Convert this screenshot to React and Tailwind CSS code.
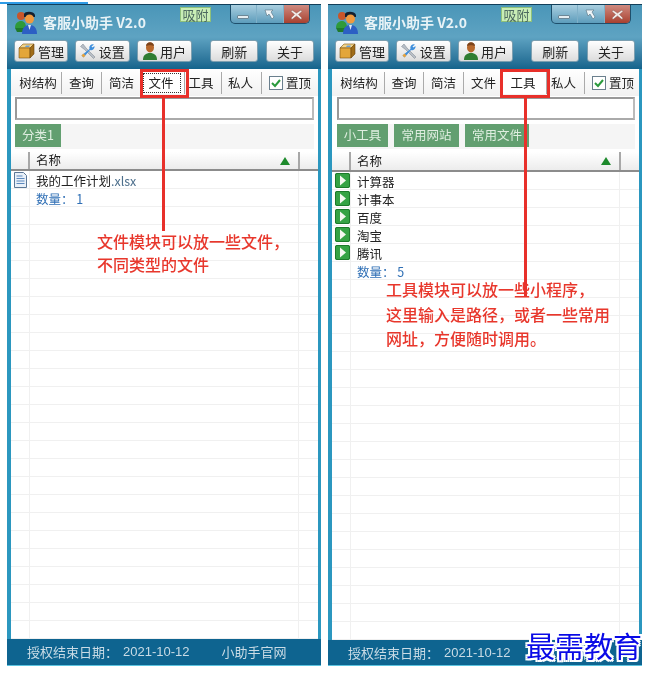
import React from 'react';

function LogoIcon() {
  return (
    <svg width="25" height="25" viewBox="0 0 25 25" className="shrink-0">
      <circle cx="7" cy="6" r="4" fill="#c8562a" />
      <path d="M1 18c0-5 3-7 6-7s5 2 5 7z" fill="#2f9a3a" />
      <path d="M1 18h9v4H3z" fill="#1f7a2c" />
      <path d="M10 4c1-3 10-3 11 1v2H10z" fill="#14202e" />
      <circle cx="15.500" cy="9" r="4.500" fill="#f09a3e" />
      <path d="M8 24c0-6 3-9 7.500-9s7.500 3 7.500 9z" fill="#2c5fc4" />
      <path d="M14 15h3l-1.500 5z" fill="#dfe8f5" />
    </svg>
  );
}

function BoxIcon() {
  return (
    <svg width="17" height="17" viewBox="0 0 17 17" className="shrink-0">
      <path d="M1 5l4-4h11l-4 4z" fill="#f4d488" stroke="#7a5212" strokeWidth="0.6" />
      <path d="M1 5h11v10H1z" fill="#e3a63a" stroke="#7a5212" strokeWidth="0.6" />
      <path d="M12 5l4-4v10l-4 4z" fill="#a06c18" stroke="#6a4510" strokeWidth="0.6" />
      <path d="M8 2.500h4l-1 1.500H7z" fill="#6aa0d8" />
    </svg>
  );
}

function ToolsIcon() {
  return (
    <svg width="16" height="16" viewBox="0 0 16 16" className="shrink-0">
      <path d="M3 1l3 4 9 9-1.500 1.500-9-9-4-3z" fill="#b7bec6" stroke="#7a838c" strokeWidth="0.5" />
      <path d="M14 1.500a3.500 3.500 0 0 0-4.500 4.500L1.500 12.500l2 2L10 7a3.500 3.500 0 0 0 4.500-4l-2 1.500-1-1z" fill="#3f8fdc" />
      <path d="M1.500 12.500l2 2 2-2-2-2z" fill="#e8a23a" />
    </svg>
  );
}

function UserIcon() {
  return (
    <svg width="14" height="18" viewBox="0 0 14 18" className="shrink-0">
      <ellipse cx="7" cy="5.500" rx="4" ry="5" fill="#b8682c" />
      <path d="M3 4c0-5 8-5 8 0-2-1-6-1-8 0z" fill="#7d431a" />
      <path d="M0 18c0-5 3-7 7-7s7 2 7 7z" fill="#2f7d32" />
    </svg>
  );
}

function DocIcon() {
  return (
    <svg width="13" height="16" viewBox="0 0 13 16" className="shrink-0">
      <path d="M.5.500h9l3 3v12H.5z" fill="#e9f0f8" stroke="#5b7796" />
      <path d="M2.500 4h6M2.500 6.500h8M2.500 9h8M2.500 11.500h8" stroke="#5c88bd" strokeWidth="1.200" />
    </svg>
  );
}

function PlayIcon() {
  return (
    <svg width="15" height="15" viewBox="0 0 15 15" className="shrink-0">
      <rect width="15" height="15" rx="2" fill="#35a344" />
      <rect x="0.500" y="0.500" width="14" height="14" rx="1.500" fill="none" stroke="#1c7a2a" />
      <path d="M5 2.500l6 5-6 5z" fill="#f4f8f0" />
    </svg>
  );
}

function WinControls() {
  return (
    <div className="flex h-[19px] w-[80px] overflow-hidden rounded-b-[5px] border border-t-0 border-[#1e4f6c] bg-linear-to-b from-[#a9cfe0] to-[#5c9cbb]">
      <div className="flex w-[26px] items-end justify-center border-r border-[#7fb0c8] pb-[4px]">
        <span className="h-[4px] w-[12px] rounded-[1px] border border-[#6d8796] bg-[#e5edf1]" />
      </div>
      <div className="flex w-[27px] items-center justify-center border-r border-[#7fb0c8]">
        <svg width="11" height="11" viewBox="0 0 11 11">
          <path d="M1 1h8L7 3l3 5-2 2-3-5-2 2z" fill="#eef4f7" stroke="#54707f" strokeWidth="0.6" />
        </svg>
      </div>
      <div className="flex flex-1 items-center justify-center bg-linear-to-b from-[#cf8a80] to-[#a8402f]">
        <svg width="13" height="11" viewBox="0 0 13 11">
          <path d="M2 1l4.500 3L11 1l1 1.500L8.500 5.500 12 9l-1 1.500L6.500 7 2 10.500 1 9l3.500-3.500L1 2.500z" fill="#f1e9e6" stroke="#7a4a40" strokeWidth="0.4" />
        </svg>
      </div>
    </div>
  );
}

function ToolBtn({ icon, label, cls }) {
  return (
    <div className={`flex h-[22px] items-center justify-center gap-[3px] rounded-[3px] border border-[#7d9fb0] bg-linear-to-b from-white to-[#dcdcdc] text-[13px] text-[#222] ${cls}`}>
      {icon}
      <span className="translate-y-[1px]">{label}</span>
    </div>
  );
}

function Tab({ label, cls = '', active, focus }) {
  return (
    <div className={`relative flex h-[22px] items-center justify-center text-[12.500px] text-[#222] ${active ? 'bg-white' : ''} ${cls}`}>
      {focus && <span className="absolute inset-[1px] right-[3px] border border-dotted border-[#333]" />}
      <span>{label}</span>
    </div>
  );
}

function Grid({ rows }) {
  const blank = Array.from({ length: 26 - rows.length }, (_, i) => i);
  const rowCls = 'flex h-[18px] shrink-0 border-b border-[#f0f0f0]';
  return (
    <div className="flex min-h-0 flex-1 flex-col overflow-hidden bg-white">
      {rows.map((row) => (
        <div key={row.key} className={rowCls}>
          <div className="flex w-[19px] shrink-0 items-center border-r border-[#f0f0f0] pl-[3px]">{row.icon}</div>
          <div className={`flex-1 pl-[6px] text-[12.500px] leading-[19px] ${row.cls || 'text-[#222]'}`}>{row.text}</div>
          <div className="w-[20px] shrink-0 border-l border-[#f0f0f0]" />
        </div>
      ))}
      {blank.map((i) => (
        <div key={i} className={rowCls}>
          <div className="w-[19px] shrink-0 border-r border-[#f0f0f0]" />
          <div className="flex-1" />
          <div className="w-[20px] shrink-0 border-l border-[#f0f0f0]" />
        </div>
      ))}
    </div>
  );
}

function Note({ lines, cls }) {
  return (
    <div className={`absolute whitespace-nowrap text-[16px] font-medium text-[#e8372c] ${cls}`}>
      {lines.map((line) => (
        <p key={line}>{line}</p>
      ))}
    </div>
  );
}

function Win({ tabs, cats, rows, alt, children }) {
  return (
    <div className="relative flex h-[662px] w-[314px] shrink-0 flex-col border-t border-[#123f5a] bg-[#2b97bf]">
      <div className="flex h-[64px] flex-col bg-linear-to-b from-[#4a96b8] via-[#5ea3c2] to-[#14648c] px-[7px]">
        <div className="flex h-[35px] items-start">
          <div className="mt-[5px]"><LogoIcon /></div>
          <span className="ml-[4px] mt-[7px] text-[14px] font-bold leading-[20px] text-[#e8f3f7]">客服小助手 V2.0</span>
          <span className="ml-[34px] mt-[2px] flex h-[15px] w-[31px] items-center justify-center border border-[#8fc07a] bg-[#c9eeb6] text-[13px] leading-none text-[#4d6a60]">吸附</span>
          <div className="ml-[19px]"><WinControls /></div>
        </div>
        <div className="flex items-center">
          <ToolBtn icon={<BoxIcon />} label="管理" cls="w-[54px]" />
          <ToolBtn icon={<ToolsIcon />} label="设置" cls="ml-[7px] w-[55px]" />
          <ToolBtn icon={<UserIcon />} label="用户" cls="ml-[7px] w-[56px]" />
          <ToolBtn label="刷新" cls="ml-[18px] w-[48px]" />
          <ToolBtn label="关于" cls="ml-[8px] w-[48px]" />
        </div>
      </div>

      <div className="ml-[4px] mr-[3px] flex min-h-0 flex-1 flex-col bg-white">
        <div className="flex h-[27px] items-start bg-linear-to-b from-white to-[#f1f1f1] pl-[4px] pt-[3px]">
          {tabs.map((t) => (
            <Tab key={t.label} label={t.label} cls={t.cls} active={t.active} focus={t.focus} />
          ))}
          <span className="ml-[7px] mt-[4px] flex h-[14px] w-[14px] items-center justify-center border border-[#6a7f8d] bg-white">
            <svg width="10" height="10" viewBox="0 0 10 10">
              <path d="M1 5l3 3 5-6" fill="none" stroke="#2a9a3c" strokeWidth="2" />
            </svg>
          </span>
          <span className="ml-[3px] mt-[3px] text-[12.500px] leading-[16px] text-[#222]">置顶</span>
        </div>
        <div className={`pr-[4px] pt-[1px] ${alt ? 'pl-[5px]' : 'pl-[4px]'}`}>
          <div className="h-[23px] border-2 border-[#999] border-b-[#aaa] border-r-[#bbb] bg-white" />
        </div>
        <div className={`mr-[4px] mt-[4px] flex h-[25px] gap-[6px] bg-[#f5f5f5] ${alt ? 'ml-[5px]' : 'ml-[4px]'}`}>
          {cats.map((c) => (
            <span key={c.label} className={`flex h-[23px] items-center justify-center bg-[#629f70] text-[12.500px] text-[#dfeee0] ${c.cls}`}>{c.label}</span>
          ))}
        </div>
        <div className={`mt-[3px] flex shrink-0 border-b-2 border-[#8c8c8c] bg-linear-to-b from-white to-[#ececec] text-[12.500px] text-[#222] ${alt ? 'h-[20px]' : 'h-[19px]'}`}>
          <div className="w-[19px] shrink-0 border-r-2 border-[#a8a8a8]" />
          <div className="flex flex-1 items-center justify-between pl-[6px] pr-[8px]">
            <span>名称</span>
            <span className="h-0 w-0 border-x-[5px] border-b-[8px] border-x-transparent border-b-[#1d8a2c]" />
          </div>
          <div className="w-[20px] shrink-0 border-l-2 border-[#a8a8a8]" />
        </div>
        <Grid rows={rows} />
      </div>

      <div className={`flex shrink-0 items-center border-b border-[#5cc4e0] bg-[#0e6490] pl-[20px] text-[13px] leading-[16px] text-[#c9dbe5] ${alt ? 'h-[26px]' : 'h-[27px]'}`}>
        <span>授权结束日期：</span>
        <span className="ml-[5px] font-['Liberation_Sans',sans-serif]">2021-10-12</span>
        <span className="ml-[32px]">小助手官网</span>
      </div>
      {children}
    </div>
  );
}

const count = 'text-[#2f6fb5]';
const sep = 'border-r border-[#aaa]';

export default function App() {
  return (
    <div className="relative h-[678px] w-[648px] overflow-hidden bg-white font-['Noto_Sans_CJK_SC','Liberation_Sans',sans-serif] blur-[0.35px]">
      <div className="absolute left-0 top-[2px] h-[2px] w-[88px] bg-[#2e9be6]" />
      <div className="flex gap-[7px] pl-[7px] pt-[4px]">
        <Win
          tabs={[
            { label: '树结构', cls: `w-[47px] ${sep}` },
            { label: '查询', cls: `w-[40px] ${sep}` },
            { label: '简洁', cls: `w-[40px] ${sep}` },
            { label: '文件', cls: `w-[43px] pr-[4px] ${sep}`, active: true, focus: true },
            { label: '工具', cls: `w-[37px] pr-[4px] ${sep}` },
            { label: '私人', cls: `w-[40px] pr-[2px] ${sep}` },
          ]}
          cats={[{ label: '分类1', cls: 'w-[46px]' }]}
          rows={[
            { key: 'f', icon: <DocIcon />, text: <span>我的工作计划<span className="text-[#4d6f8c]">.xlsx</span></span> },
            { key: 'n', text: '数量： 1', cls: count },
          ]}
        >
          <span className="absolute left-[133px] top-[64px] h-[29px] w-[49px] border-[3px] border-[#e8302a]" />
          <span className="absolute left-[155px] top-[93px] h-[133px] w-[3px] bg-[#e8302a]" />
          <Note lines={['文件模块可以放一些文件，', '不同类型的文件']} cls="left-[90px] top-[225px] leading-[23px]" />
        </Win>
        <Win
          alt
          tabs={[
            { label: '树结构', cls: `w-[49px] pr-[2px] ${sep}` },
            { label: '查询', cls: `w-[39px] ${sep}` },
            { label: '简洁', cls: `w-[40px] ${sep}` },
            { label: '文件', cls: 'w-[39px]' },
            { label: '工具', cls: `w-[44px] pr-[3px] ${sep}`, active: true },
            { label: '私人', cls: `w-[38px] pr-[4px] ${sep}` },
          ]}
          cats={[
            { label: '小工具', cls: 'w-[51px]' },
            { label: '常用网站', cls: 'w-[65px]' },
            { label: '常用文件', cls: 'w-[64px]' },
          ]}
          rows={[
            { key: '1', icon: <PlayIcon />, text: '计算器' },
            { key: '2', icon: <PlayIcon />, text: '计事本' },
            { key: '3', icon: <PlayIcon />, text: '百度' },
            { key: '4', icon: <PlayIcon />, text: '淘宝' },
            { key: '5', icon: <PlayIcon />, text: '腾讯' },
            { key: 'n', text: '数量： 5', cls: count },
          ]}
        >
          <span className="absolute left-[172px] top-[64px] h-[29px] w-[50px] border-[3px] border-[#e8302a]" />
          <span className="absolute left-[196px] top-[93px] h-[198px] w-[3px] bg-[#e8302a]" />
          <Note
            lines={['工具模块可以放一些小程序，', '这里输入是路径，或者一些常用', '网址，方便随时调用。']}
            cls="left-[58px] top-[272px] leading-[24.500px]"
          />
          <span className="absolute right-0 top-[622px] whitespace-nowrap text-[29px] leading-[36px] text-[#0a0ae6] [text-shadow:2px_0_0_#fff,-2px_0_0_#fff,0_2px_0_#fff,0_-2px_0_#fff,2px_2px_0_#fff,-2px_-2px_0_#fff,2px_-2px_0_#fff,-2px_2px_0_#fff]">
            最需教育
          </span>
        </Win>
      </div>
    </div>
  );
}
